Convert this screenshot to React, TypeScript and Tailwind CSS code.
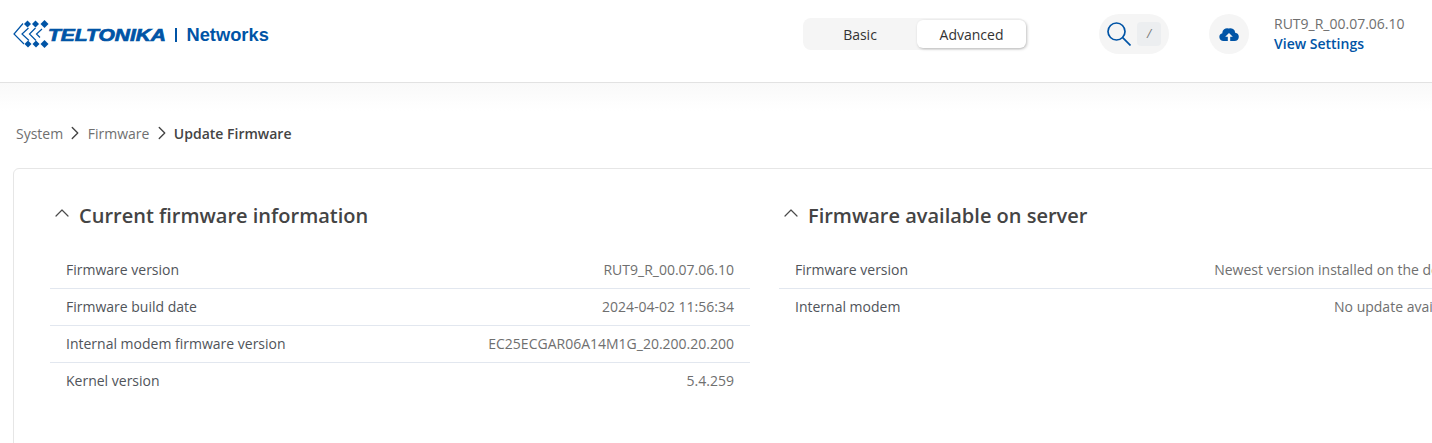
import { ChevronRight, ChevronUp } from "lucide-react";

const current = [
  ["Firmware version", "RUT9_R_00.07.06.10"],
  ["Firmware build date", "2024-04-02 11:56:34"],
  ["Internal modem firmware version", "EC25ECGAR06A14M1G_20.200.20.200"],
  ["Kernel version", "5.4.259"],
];

const server = [
  ["Firmware version", "Newest version installed on the device"],
  ["Internal modem", "No update available"],
];

function Logo() {
  return (
    <div className="flex items-center">
      <svg width="38" height="28" viewBox="0 0 38 28" className="shrink-0">
        <g fill="#0054a6">
          <path d="M11 4 14.500 0.500 18 4 14.500 7.500Z" />
          <path d="M19 4 22.500 0.500 26 4 22.500 7.500Z" />
          <path d="M27.500 4 31.500 0 35.500 4 31.500 8Z" />
          <path d="M11.500 24 15 20.500 18.500 24 15 27.500Z" />
          <path d="M19.500 24 23 20.500 26.500 24 23 27.500Z" />
          <path d="M27.500 24 31.500 20 35.500 24 31.500 28Z" />
        </g>
        <g fill="none" stroke="#0054a6" strokeWidth="1.200">
          <path d="M10 3.500 1 14 11 24" />
          <path d="M15.500 8 9 14 16 20.500" />
          <path d="M22.500 8 16.500 14 23 20.500" />
          <path d="M29 9 23.500 14 27 17.500" />
        </g>
      </svg>
      <span className="ml-[-3px] inline-block w-[118px] origin-left translate-y-[1px] scale-x-[1.27] font-['Liberation_Sans',sans-serif] text-[16.500px] leading-none font-bold whitespace-nowrap text-[#0054a6] italic [-webkit-text-stroke:0.7px_#0054a6]">
        TELTONIKA
      </span>
      <span className="mr-[10px] ml-[9px] h-[14px] w-[1.500px] translate-y-[1px] bg-[#0054a6]" />
      <span className="translate-y-[1px] font-['Liberation_Sans',sans-serif] text-[18.300px] leading-none font-bold text-[#0054a6]">
        Networks
      </span>
    </div>
  );
}

function InfoColumn({ title, rows }: { title: string; rows: string[][] }) {
  return (
    <div className="w-[700px] shrink-0 last:w-[701px]">
      <div className="flex h-[30px] items-center gap-[5px]">
        <ChevronUp className="h-[24px] w-[24px] -translate-y-[3px] text-[#4a4a4a]" strokeWidth={1.200} />
        <h2 className="text-[20px] leading-[30px] font-semibold text-[#444]">{title}</h2>
      </div>
      <div className="mt-[21px]">
        {rows.map(([label, value]) => (
          <div
            key={label}
            className="flex h-[37px] items-center justify-between border-b border-[#e2e7ef] px-[16px] pb-[2px] text-[14px] last:border-b-0"
          >
            <span className="text-[#50545a]">{label}</span>
            <span className="text-[#6f6f6f]">{value}</span>
          </div>
        ))}
      </div>
    </div>
  );
}

export default function App() {
  return (
    <div className="h-[443px] w-[1432px] overflow-hidden bg-white font-['Open_Sans',sans-serif]">
      {/* HEADER */}
      <header className="flex h-[83px] items-center border-b border-[#e2e2e2] bg-white pb-[14px] pl-[13px]">
        <div className="w-[790px]">
          <Logo />
        </div>

        <div className="flex h-[32px] w-[223px] items-center rounded-[8px] bg-[#f5f5f5] text-[14px] text-[#333]">
          <span className="w-[114px] text-center">Basic</span>
          <span className="flex h-[28px] w-[109px] items-center justify-center rounded-[6px] bg-white shadow-[1px_1px_3px_rgba(0,0,0,0.25)]">
            Advanced
          </span>
        </div>

        <div className="ml-[73px] flex h-[40px] w-[70px] items-center rounded-[20px] bg-[#f5f5f5] pl-[8px]">
          <svg width="24" height="24" viewBox="0 0 24 24" fill="none" stroke="#0054a6" strokeWidth="1.700">
            <circle cx="9.500" cy="9.500" r="8.500" />
            <path d="M15.700 15.700 23.500 23.500" />
          </svg>
          <span className="ml-[6px] flex h-[24px] w-[24px] items-center justify-center rounded-[4px] bg-[#eceef0] text-[12px] text-[#777] italic">
            /
          </span>
        </div>

        <div className="ml-[40px] flex h-[40px] w-[40px] items-center justify-center rounded-full bg-[#f5f5f5]">
          <svg width="20" height="14" viewBox="0 0 20 15" preserveAspectRatio="none" fill="#0054a6">
            <path d="M4.500 15A4.300 4.300 0 0 1 3.400 6.600 4.800 4.800 0 0 1 9.700 1.500 5 5 0 0 1 16.200 6.100 4.500 4.500 0 0 1 15.500 15H11.200V10.500H13.800L10 6.300 6.200 10.500H8.800V15Z" />
          </svg>
        </div>

        <div className="ml-[25px] flex flex-col">
          <span className="text-[14px] leading-[20px] text-[#6f6f6f]">RUT9_R_00.07.06.10</span>
          <span className="text-[14px] leading-[20px] font-semibold text-[#0054a6]">View Settings</span>
        </div>
      </header>

      <div className="bg-gradient-to-b from-[#f9f9f9] to-white bg-[length:100%_28px] bg-no-repeat pt-[39px] pl-[16px]">
        {/* BREADCRUMB */}
        <nav className="flex h-[22px] items-center text-[14px]">
          <span className="text-[#6f6f6f]">System</span>
          <ChevronRight className="mx-[1.250px] h-[22px] w-[22px] text-[#444]" strokeWidth={1.500} />
          <span className="text-[#6f6f6f]">Firmware</span>
          <ChevronRight className="mx-[1.250px] h-[22px] w-[22px] text-[#444]" strokeWidth={1.500} />
          <span className="font-semibold text-[#444]">Update Firmware</span>
        </nav>

        {/* CARD */}
        <section className="mt-[24px] -ml-[3px] flex h-[300px] w-[1520px] gap-[29px] rounded-tl-[6px] border border-[#e6e6e6] bg-white pt-[32px] pl-[36px]">
          <InfoColumn title="Current firmware information" rows={current} />
          <InfoColumn title="Firmware available on server" rows={server} />
        </section>
      </div>
    </div>
  );
}
